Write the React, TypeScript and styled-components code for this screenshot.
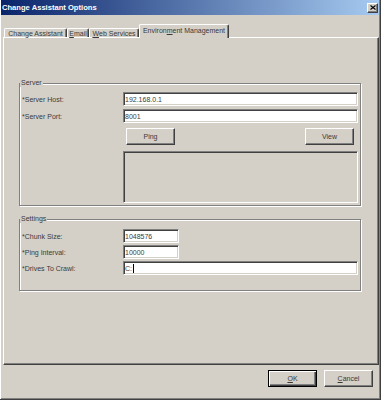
import React from "react";
import styled, { createGlobalStyle } from "styled-components";

const GlobalStyle = createGlobalStyle`
  html, body {
    margin: 0;
    padding: 0;
    background: #d4d0c8;
  }
  body {
    font-family: "Liberation Sans", Arial, sans-serif;
  }
`;

const Window = styled.div`
  box-sizing: border-box;
  width: 381px;
  height: 400px;
  background: #d4d0c8;
  border-right: 1px solid #404040;
  border-bottom: 1px solid #404040;
  box-shadow: inset 1px 0 #ffffff, inset -1px -1px #808080;
  display: flex;
  flex-direction: column;
  font-size: 7px;
  color: #3a3a3a;
`;

const TitleBar = styled.div`
  height: 15px;
  margin: 0 1px;
  display: flex;
  align-items: center;
  justify-content: space-between;
  background: linear-gradient(to right, #0a246a, #a6caf0);
`;

const Title = styled.span`
  padding-left: 1px;
  color: #ffffff;
  font-weight: bold;
  font-size: 7.6px;
  line-height: 15px;
`;

const CloseButton = styled.div`
  box-sizing: border-box;
  width: 11px;
  height: 10px;
  margin-right: 1px;
  background: #d4d0c8;
  border: 1px solid;
  border-color: #ffffff #404040 #404040 #ffffff;
  box-shadow: inset -1px -1px #808080;
  display: flex;
  align-items: center;
  justify-content: center;
`;

const Body = styled.div`
  flex: 1;
  padding: 0 1px 0 3px;
  display: flex;
  flex-direction: column;
`;

const TabStrip = styled.div`
  margin-top: 9px;
  height: 14px;
  padding-left: 1px;
  display: flex;
  align-items: flex-end;
  margin-bottom: -1px;
  position: relative;
  z-index: 1;
`;

const Tab = styled.div<{ $active?: boolean; $width: number }>`
  box-sizing: border-box;
  width: ${(p) => p.$width}px;
  height: ${(p) => (p.$active ? "14px" : "9px")};
  margin-bottom: ${(p) => (p.$active ? "0" : "1px")};
  padding-bottom: ${(p) => (p.$active ? "2px" : "0")};
  display: flex;
  align-items: center;
  justify-content: center;
  white-space: nowrap;
  background: #d4d0c8;
  border-top: 1px solid #ffffff;
  border-left: 1px solid #ffffff;
  border-right: 1px solid #404040;
  border-radius: 2px 2px 0 0;
  box-shadow: inset -1px 0 #808080;
`;

const Panel = styled.div`
  box-sizing: border-box;
  height: 328px;
  padding: 45px 17px 0 15px;
  border: 1px solid;
  border-color: #ffffff #404040 #404040 #ffffff;
  box-shadow: inset -1px -1px #808080;
`;

const Group = styled.div`
  position: relative;
  box-sizing: border-box;
  border: 1px solid #808080;
  box-shadow: inset 1px 1px #ffffff, 1px 1px #ffffff;
  & + & {
    margin-top: 13px;
  }
`;

const Legend = styled.span`
  position: absolute;
  top: -5px;
  left: 0;
  padding: 0 1px;
  line-height: 8px;
  background: #d4d0c8;
`;

const GroupBody = styled.div<{ $gap: number; $pad: string }>`
  display: grid;
  grid-template-columns: 103px 1fr;
  row-gap: ${(p) => p.$gap}px;
  padding: ${(p) => p.$pad};
`;

const Label = styled.div`
  padding-left: 2px;
  display: flex;
  align-items: center;
  white-space: nowrap;
`;

const Field = styled.div<{ $width?: number }>`
  box-sizing: border-box;
  height: 14px;
  width: ${(p) => (p.$width ? `${p.$width}px` : "100%")};
  padding: 0 1px;
  display: flex;
  align-items: center;
  background: #ffffff;
  border: 1px solid;
  border-color: #808080 #ffffff #ffffff #808080;
  box-shadow: inset 1px 1px #404040, inset -1px -1px #d4d0c8;
  white-space: nowrap;
`;

const Caret = styled.span`
  display: inline-block;
  width: 0;
  height: 9px;
  margin-left: 1px;
  border-left: 1px solid #000000;
`;

const ButtonRow = styled.div`
  grid-column: 2;
  margin-top: 2px;
  padding: 0 4px 0 3px;
  display: flex;
  justify-content: space-between;
`;

const Button = styled.div<{ $default?: boolean }>`
  box-sizing: border-box;
  width: 49px;
  height: 17px;
  display: flex;
  align-items: center;
  justify-content: center;
  background: #d4d0c8;
  border: 1px solid;
  border-color: ${(p) =>
    p.$default ? "#000000" : "#ffffff #404040 #404040 #ffffff"};
  box-shadow: ${(p) =>
    p.$default
      ? "inset 1px 1px #ffffff, inset -1px -1px #404040, inset -2px -2px #808080"
      : "inset -1px -1px #808080"};
`;

const StatusBox = styled.div`
  grid-column: 2;
  box-sizing: border-box;
  height: 52px;
  margin-top: 3px;
  background: #d4d0c8;
  border: 1px solid;
  border-color: #808080 #ffffff #ffffff #808080;
  box-shadow: inset 1px 1px #404040, inset -1px -1px #d4d0c8;
`;

const Footer = styled.div`
  padding: 5px 6px 0 0;
  display: flex;
  justify-content: flex-end;
  gap: 7px;
`;

const Key = styled.span`
  text-decoration: underline;
`;

const tabs = [
  { pre: "Change Assistant", key: "", post: "", width: 63 },
  { pre: "", key: "E", post: "mail", width: 22 },
  { pre: "", key: "W", post: "eb Services", width: 50 },
  { pre: "Environ", key: "m", post: "ent Management", width: 90, active: true },
];

const App: React.FC = () => {
  return (
    <>
      <GlobalStyle />
      <Window>
        <TitleBar>
          <Title>Change Assistant Options</Title>
          <CloseButton>
            <svg width="6" height="5" viewBox="0 0 6 5">
              <path d="M0.5 0.5 L5.5 4.5 M5.5 0.5 L0.5 4.5" stroke="#000" strokeWidth="1.1" />
            </svg>
          </CloseButton>
        </TitleBar>
        <Body>
          <TabStrip>
            {tabs.map((t) => (
              <Tab key={t.pre + t.key + t.post} $active={t.active} $width={t.width}>
                {t.pre}
                {t.key && <Key>{t.key}</Key>}
                {t.post}
              </Tab>
            ))}
          </TabStrip>
          <Panel>
            <Group>
              <Legend>Server</Legend>
              <GroupBody $gap={3} $pad="8px 2px 2px 0">
                <Label>*Server Host:</Label>
                <Field>192.168.0.1</Field>
                <Label>*Server Port:</Label>
                <Field>8001</Field>
                <ButtonRow>
                  <Button>Ping</Button>
                  <Button>View</Button>
                </ButtonRow>
                <StatusBox />
              </GroupBody>
            </Group>
            <Group>
              <Legend>Settings</Legend>
              <GroupBody $gap={2} $pad="9px 2px 15px 0">
                <Label>*Chunk Size:</Label>
                <Field $width={56}>1048576</Field>
                <Label>*Ping Interval:</Label>
                <Field $width={56}>10000</Field>
                <Label>*Drives To Crawl:</Label>
                <Field>
                  C:
                  <Caret />
                </Field>
              </GroupBody>
            </Group>
          </Panel>
          <Footer>
            <Button $default>
              <Key>O</Key>K
            </Button>
            <Button>
              <Key>C</Key>ancel
            </Button>
          </Footer>
        </Body>
      </Window>
    </>
  );
};

export default App;
